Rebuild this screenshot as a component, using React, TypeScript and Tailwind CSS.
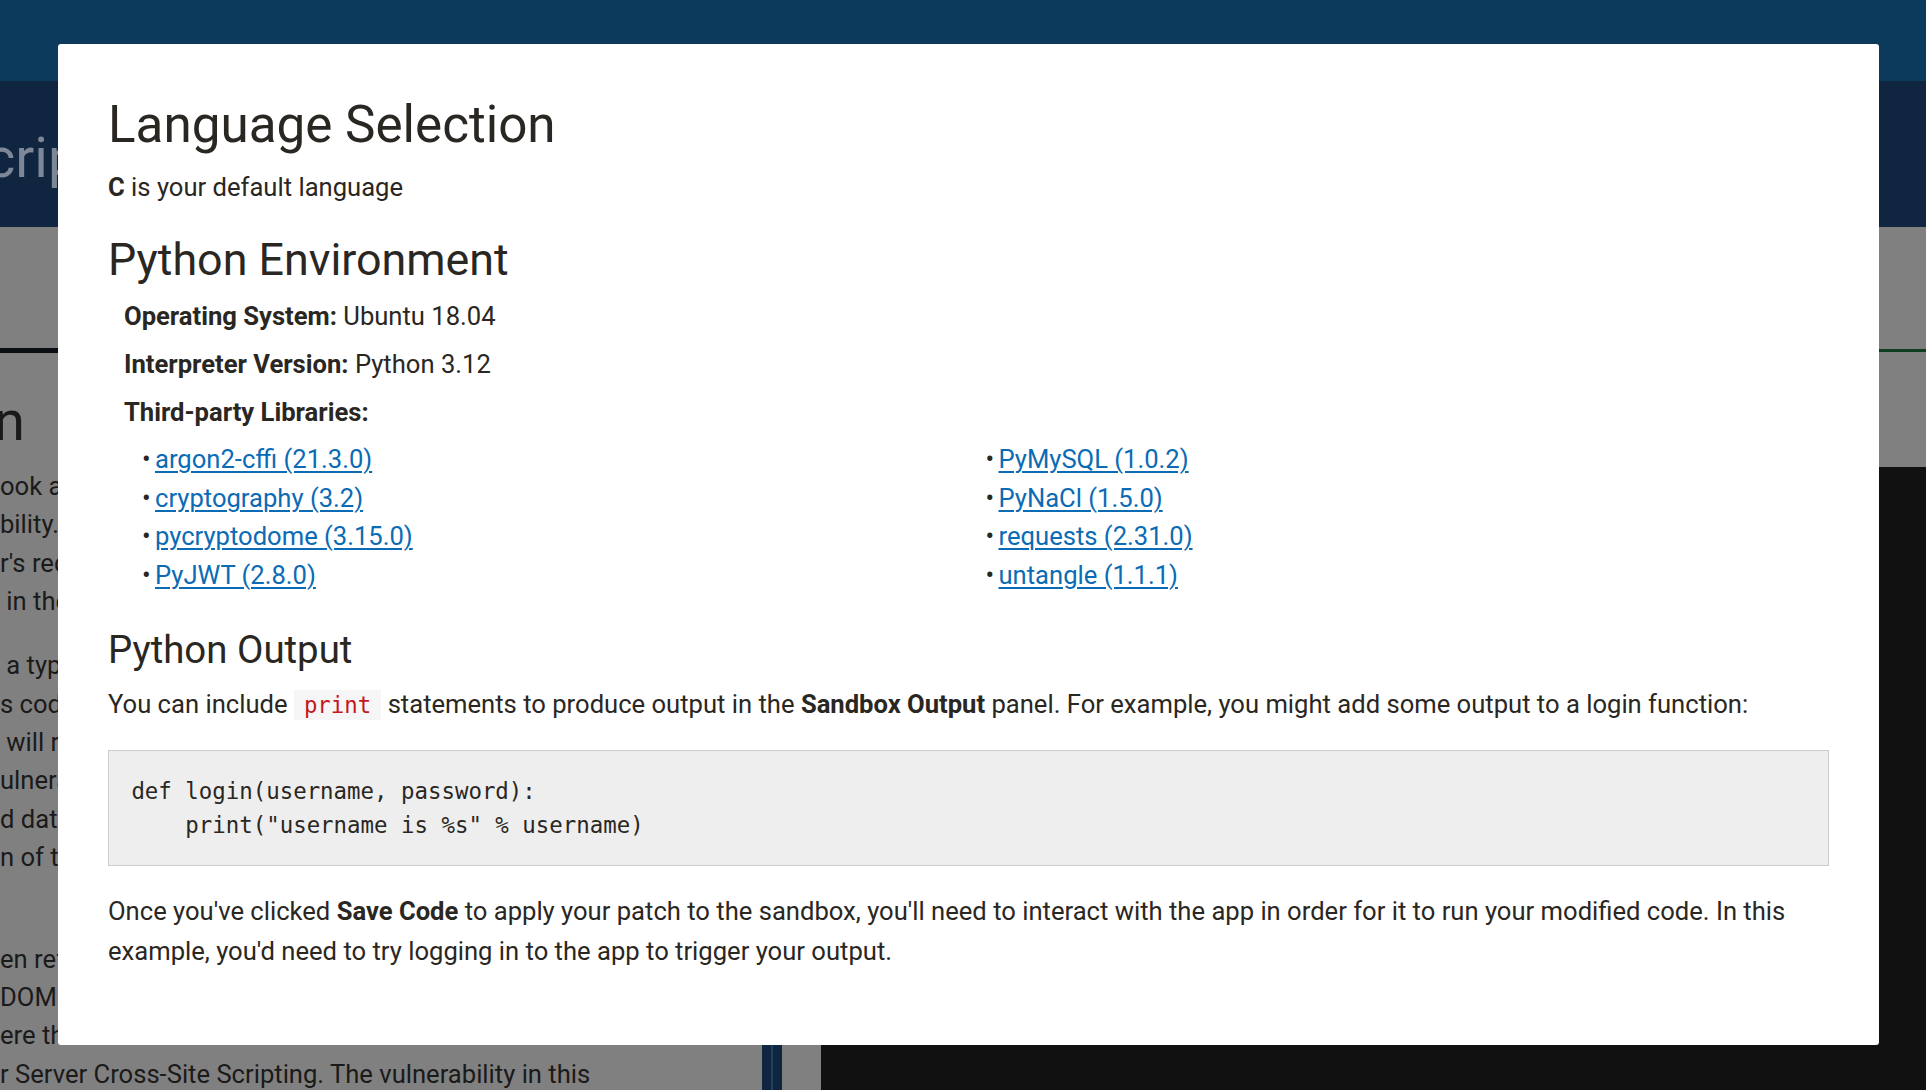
import React from "react";

const leftLines1 = ["ook at", "bility. A", "r's req", " in the"];
const leftLines2 = [" a type", "s code", " will ru", "ulnerab", "d data", "n of the"];
const leftLines3 = [
  "en refer",
  "DOM of",
  "ere the",
  "r Server Cross-Site Scripting. The vulnerability in this",
];

const libsLeft = [
  "argon2-cffi (21.3.0)",
  "cryptography (3.2)",
  "pycryptodome (3.15.0)",
  "PyJWT (2.8.0)",
];
const libsRight = [
  "PyMySQL (1.0.2)",
  "PyNaCl (1.5.0)",
  "requests (2.31.0)",
  "untangle (1.1.1)",
];

function Lib({ name }: { name: string }) {
  return (
    <li className="flex items-baseline">
      <span className="w-[13px] shrink-0 text-[#2a2723]">•</span>
      <a href="#" className="text-[#0b6bb5] underline underline-offset-[3px] decoration-[1.5px]">
        {name}
      </a>
    </li>
  );
}

export default function App() {
  return (
    <div className="relative w-[1926px] h-[1090px] overflow-hidden bg-[#111111] font-['Roboto',sans-serif]">
      {/* page behind the dialog */}
      <div className="flex flex-col h-full">
        <div className="h-[81px] shrink-0 bg-[#0b3a5c]" />
        <div className="h-[146px] shrink-0 bg-[#0f2540] overflow-hidden pt-[49px]">
          <div className="whitespace-nowrap text-[56px] leading-[56px] text-[#7d8797] -ml-[14px]">
            crip
          </div>
        </div>
        <div className="flex flex-1 min-h-0">
          <div className="w-[762px] shrink-0 bg-[#808080] flex flex-col overflow-hidden">
            <div className="h-[121px] shrink-0" />
            <div className="h-[5px] shrink-0 bg-[#0b0f14]" />
            <div className="pt-[35px] text-[#1a1a1a] whitespace-pre">
              <div className="text-[56px] leading-[67px] -ml-[6px]">n</div>
              <div className="mt-[12px] text-[25.6px] leading-[38.4px]">
                {leftLines1.map((l, i) => (
                  <div key={i}>{l}</div>
                ))}
              </div>
              <div className="mt-[25.6px] text-[25.6px] leading-[38.4px]">
                {leftLines2.map((l, i) => (
                  <div key={i}>{l}</div>
                ))}
              </div>
              <div className="mt-[63px] text-[25.6px] leading-[38.4px]">
                {leftLines3.map((l, i) => (
                  <div key={i}>{l}</div>
                ))}
              </div>
            </div>
          </div>
          <div className="w-[20px] shrink-0 bg-[#0f2540] flex justify-center">
            <div className="w-[2px] bg-[#22405f]" />
          </div>
          <div className="flex-1 flex flex-col">
            <div className="h-[122px] shrink-0 bg-[#808080]" />
            <div className="h-[3px] shrink-0 bg-[#0f3d22]" />
            <div className="h-[115px] shrink-0 bg-[#808080]" />
            <div className="flex flex-1">
              <div className="w-[39px] bg-[#808080]" />
              <div className="flex-1 bg-[#111111]" />
            </div>
          </div>
        </div>
      </div>

      {/* dialog */}
      <div className="absolute left-[58px] top-[44px] w-[1821px] h-[1001px] bg-white rounded-[3px] px-[50px] pt-[50px] text-[#2a2723] text-[25.6px] leading-[40px]">
        <h1 className="text-[51.2px] leading-[61.44px] font-normal">Language Selection</h1>
        <p className="mt-[12px]">
          <strong className="font-bold">C</strong> is your default language
        </p>
        <h2 className="mt-[25px] text-[44.8px] leading-[55px] font-normal">Python Environment</h2>
        <div className="mt-[5px] pl-[16px] leading-[48px]">
          <div>
            <strong className="font-bold">Operating System:</strong> Ubuntu 18.04
          </div>
          <div>
            <strong className="font-bold">Interpreter Version:</strong> Python 3.12
          </div>
          <div>
            <strong className="font-bold">Third-party Libraries:</strong>
          </div>
        </div>
        <div className="mt-[4px] ml-[34px] grid grid-cols-2 leading-[38.4px]">
          <ul>
            {libsLeft.map((n) => (
              <Lib key={n} name={n} />
            ))}
          </ul>
          <ul>
            {libsRight.map((n) => (
              <Lib key={n} name={n} />
            ))}
          </ul>
        </div>
        <h3 className="mt-[33px] text-[38.4px] leading-[46px] font-normal">Python Output</h3>
        <p className="mt-[11px]">
          You can include{" "}
          <code className="font-['DejaVu_Sans_Mono',monospace] text-[22.4px] text-[#c7161b] bg-[#f6f6f6] px-[10px] py-[2px]">
            print
          </code>{" "}
          statements to produce output in the <strong className="font-bold">Sandbox Output</strong> panel. For
          example, you might add some output to a login function:
        </p>
        <pre className="mt-[25px] bg-[#eeeeee] border border-[#cccccc] px-[22.4px] pt-[24.4px] pb-[22.4px] font-['DejaVu_Sans_Mono',monospace] text-[22.4px] leading-[33.6px] text-[#2a2723]">
{`def login(username, password):
    print("username is %s" % username)`}
        </pre>
        <p className="mt-[25px]">
          Once you've clicked <strong className="font-bold">Save Code</strong> to apply your patch to the sandbox,
          you'll need to interact with the app in order for it to run your modified code. In this example, you'd
          need to try logging in to the app to trigger your output.
        </p>
      </div>
    </div>
  );
}
